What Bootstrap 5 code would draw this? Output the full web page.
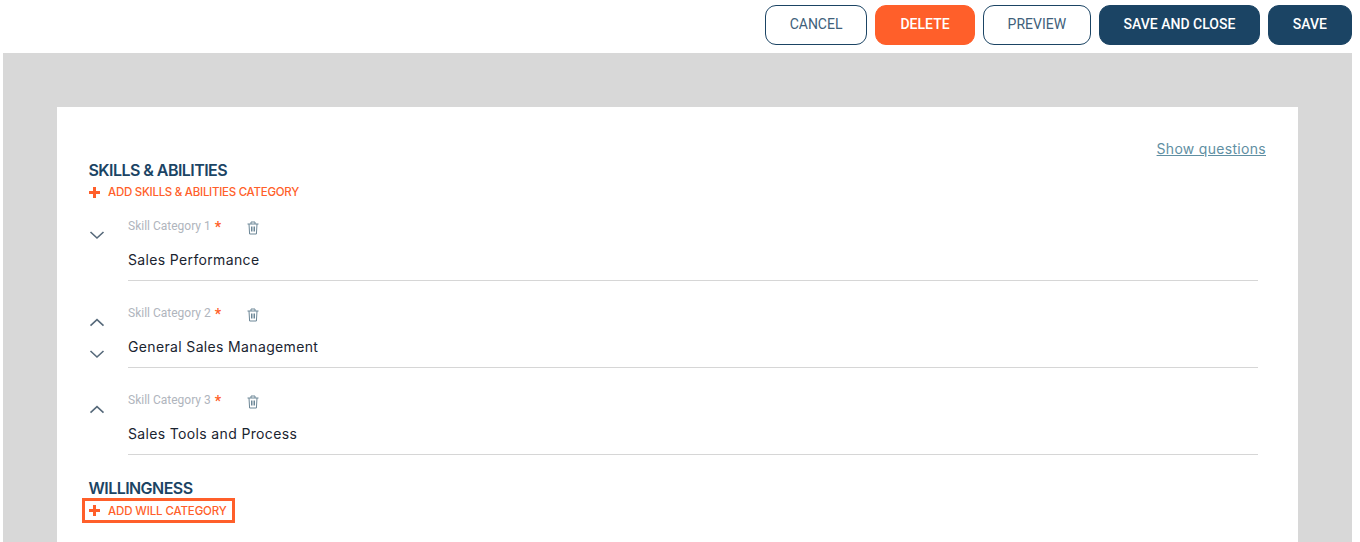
<!DOCTYPE html>
<html lang="en">
<head>
  <meta charset="UTF-8" />
  <meta name="viewport" content="width=device-width, initial-scale=1" />
  <title>Skills and abilities</title>
  <link href="https://cdn.jsdelivr.net/npm/bootstrap@5.3.0/dist/css/bootstrap.min.css" rel="stylesheet" />
  <style>
    html, body { height: 542px; overflow: hidden; }
    body { background: #fff; font-family: "Inter", "Open Sans", sans-serif; color: #1c2b3a; }
    .top-bar { height: 53px; padding: 5px 8px 0 0; }
    .act-btn {
      height: 40px; border-radius: 11px; font-family: "Roboto", sans-serif; font-size: 14px;
      line-height: 36px; padding: 0 24px 2px; border: 1px solid #1b4464; text-transform: uppercase;
    }
    .act-ghost { background: #fff; color: #40607a; }
    .act-dark { background: #1b4464; color: #fff; font-weight: 500; }
    .act-wide { padding: 0 23.5px 2px; }
    .act-orange { background: #ff5f2a; border-color: #ff5f2a; color: #fff; font-weight: 500; }
    .grey-area { background: #d8d8d8; margin: 0 8px 0 3px; height: 489px; padding: 54px 54px 0; overflow: hidden; }
    .white-sheet { background: #fff; height: 500px; padding: 0 32px; position: relative; width: 1241px; }
    .show-link {
      position: absolute; right: 32px; top: 31px; font-size: 14px; color: #5f8fa3;
      text-decoration: underline; letter-spacing: .3px;
    }
    .sect-title { font-size: 16px; font-weight: 600; color: #1b4464; line-height: 20px; letter-spacing: -.55px; margin: 0 0 0 -.5px; }
    .add-link { color: #ff5f2a; font-size: 11.5px; font-weight: 500; line-height: 16px; letter-spacing: -.27px; }
    .add-link svg { margin-right: 8px; }
    .first-add { margin-top: 4px; margin-bottom: 18px; }
    .boxed-add { outline: 3px solid #ff5f2a; width: 147px; height: 19px; margin-left: -4px; padding-left: 4px; margin-top: 3px; letter-spacing: -.13px; }
    .cat-row { height: 87px; padding-right: 8px; }
    .arrow-col { width: 39px; flex: none; padding-top: 12px; }
    .arrow-col svg { display: block; margin-bottom: 22px; }
    .cat-body { flex: 1; border-bottom: 1px solid #d6d6d6; height: 63px; }
    .cat-head { height: 16px; }
    .cat-head svg { margin-top: 4px; }
    .cat-label { font-family: "Roboto", sans-serif; font-size: 12px; color: #b0b5bd; line-height: 16px; width: 119px; }
    .req-star { color: #ff5f2a; font-size: 14px; font-weight: 700; line-height: 14px; vertical-align: -2px; margin-left: 1px; }
    .cat-value { font-size: 14px; line-height: 20px; margin-top: 16px; letter-spacing: .35px; color: #1a2430; }
    .last-title { margin-top: -1px; }
  </style>
</head>
<body>
  <div class="top-bar d-flex justify-content-end gap-2">
    <button type="button" class="act-btn act-ghost">Cancel</button>
    <button type="button" class="act-btn act-orange">Delete</button>
    <button type="button" class="act-btn act-ghost">Preview</button>
    <button type="button" class="act-btn act-dark act-wide">Save and close</button>
    <button type="button" class="act-btn act-dark">Save</button>
  </div>

  <div class="grey-area">
    <div class="white-sheet">
      <a class="show-link" href="#">Show questions</a>

      <div style="height:53px"></div>
      <h2 class="sect-title">SKILLS &amp; ABILITIES</h2>
      <div class="add-link first-add d-flex align-items-center">
        <svg width="11" height="11" viewBox="0 0 11 11"><path d="M4 0h3v4h4v3H7v4H4V7H0V4h4z" fill="#ff5f2a"/></svg>
        ADD SKILLS &amp; ABILITIES CATEGORY
      </div>

      <div class="cat-row d-flex">
        <div class="arrow-col">
          <svg width="16" height="10" viewBox="0 0 16 10"><path d="M1.5 2l6.5 6 6.5-6" fill="none" stroke="#56697a" stroke-width="1.6"/></svg>
        </div>
        <div class="cat-body">
          <div class="cat-head d-flex align-items-center">
            <div class="cat-label">Skill Category 1 <span class="req-star">*</span></div>
            <svg width="12" height="14" viewBox="0 0 12 14"><path d="M.5 3h11M4 3V1h4v2M2 3l.6 10h6.8L10 3M4.5 5.5v5M6 5.5v5M7.5 5.5v5" fill="none" stroke="#6d8797" stroke-width="1"/></svg>
          </div>
          <div class="cat-value">Sales Performance</div>
        </div>
      </div>

      <div class="cat-row d-flex">
        <div class="arrow-col">
          <svg width="16" height="10" viewBox="0 0 16 10"><path d="M1.5 8.7l6.5-6 6.5 6" fill="none" stroke="#56697a" stroke-width="1.6"/></svg>
          <svg width="16" height="10" viewBox="0 0 16 10"><path d="M1.5 2l6.5 6 6.5-6" fill="none" stroke="#56697a" stroke-width="1.6"/></svg>
        </div>
        <div class="cat-body">
          <div class="cat-head d-flex align-items-center">
            <div class="cat-label">Skill Category 2 <span class="req-star">*</span></div>
            <svg width="12" height="14" viewBox="0 0 12 14"><path d="M.5 3h11M4 3V1h4v2M2 3l.6 10h6.8L10 3M4.5 5.5v5M6 5.5v5M7.5 5.5v5" fill="none" stroke="#6d8797" stroke-width="1"/></svg>
          </div>
          <div class="cat-value">General Sales Management</div>
        </div>
      </div>

      <div class="cat-row d-flex">
        <div class="arrow-col">
          <svg width="16" height="10" viewBox="0 0 16 10"><path d="M1.5 8.7l6.5-6 6.5 6" fill="none" stroke="#56697a" stroke-width="1.6"/></svg>
        </div>
        <div class="cat-body">
          <div class="cat-head d-flex align-items-center">
            <div class="cat-label">Skill Category 3 <span class="req-star">*</span></div>
            <svg width="12" height="14" viewBox="0 0 12 14"><path d="M.5 3h11M4 3V1h4v2M2 3l.6 10h6.8L10 3M4.5 5.5v5M6 5.5v5M7.5 5.5v5" fill="none" stroke="#6d8797" stroke-width="1"/></svg>
          </div>
          <div class="cat-value">Sales Tools and Process</div>
        </div>
      </div>

      <h2 class="sect-title last-title">WILLINGNESS</h2>
      <div class="add-link boxed-add d-flex align-items-center">
        <svg width="11" height="11" viewBox="0 0 11 11"><path d="M4 0h3v4h4v3H7v4H4V7H0V4h4z" fill="#ff5f2a"/></svg>
        ADD WILL CATEGORY
      </div>
    </div>
  </div>

  <script src="https://cdn.jsdelivr.net/npm/bootstrap@5.3.0/dist/js/bootstrap.bundle.min.js"></script>
</body>
</html>
